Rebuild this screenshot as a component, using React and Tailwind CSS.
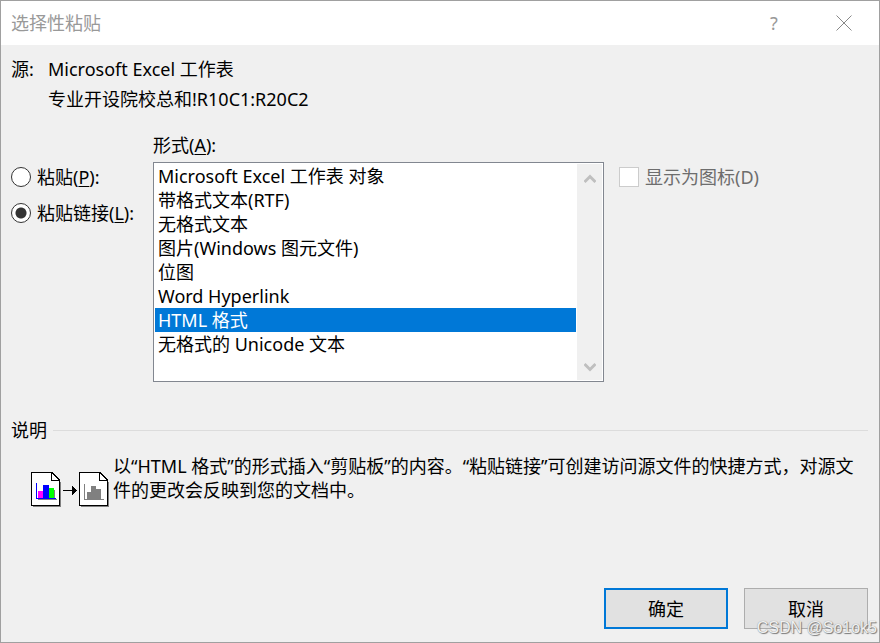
import { useState } from "react";

const formats = [
  "Microsoft Excel 工作表 对象",
  "带格式文本(RTF)",
  "无格式文本",
  "图片(Windows 图元文件)",
  "位图",
  "Word Hyperlink",
  "HTML 格式",
  "无格式的 Unicode 文本",
];

function PageIcon() {
  return (
    <>
      <path d="M2 34h28v1H2zM29 10h1v25h-1z" fill="#808080" />
      <path d="M0 0h21v1h-20v32h27v-24h1v25h-29z" fill="#000" />
      <path d="M1 1h19v8h8v24H1z" fill="#fff" />
      <path d="M20 0h1v8h8v1h-9z" fill="#000" />
      <path d="M21 1h1v1h1v1h1v1h1v1h1v1h1v1h1v1h-7z" fill="#fff" />
      <path d="M21 0h1v1h1v1h1v1h1v1h1v1h1v1h1v1h1v2h-1v-1h-1v-1h-1v-1h-1v-1h-1v-1h-1v-1h-1v-1h-1z" fill="#000" />
    </>
  );
}

function PasteLinkIcon() {
  return (
    <svg
      width="80"
      height="38"
      viewBox="0 0 80 38"
      shapeRendering="crispEdges"
      className="shrink-0"
      aria-hidden="true"
    >
      <PageIcon />
      <path d="M7 27h19v1H7zM23 18h1v9h-1z" fill="#808080" />
      <path d="M5 11h1v15h19v1H5z" fill="#00f" />
      <path d="M7 19h5v7H7z" fill="#f0f" />
      <path d="M12 13h6v13h-6z" fill="#00f" />
      <path d="M18 16h5v10h-5z" fill="#0f0" />
      <path d="M32 18h9v1h-9zM41 14h1v1h1v1h1v1h1v1h1v1h-1v1h-1v1h-1v1h-1v1h-1z" fill="#000" />
      <g transform="translate(48 0)">
        <PageIcon />
        <path d="M5 12h1v15h19v1H5z" fill="#808080" />
        <path d="M8 20h4v-6h5v3h5v10H8z" fill="#808080" />
      </g>
    </svg>
  );
}

function Radio({ checked, onChange, children }) {
  return (
    <label className="flex items-center gap-1.5 h-6 whitespace-nowrap">
      <input
        type="radio"
        name="mode"
        checked={checked}
        onChange={onChange}
        className="appearance-none size-5 shrink-0 rounded-full border border-[#333] bg-white checked:bg-[radial-gradient(circle,#333_5px,#fff_6px)]"
      />
      <span>{children}</span>
    </label>
  );
}

function App() {
  const [mode, setMode] = useState("link");
  const [selected, setSelected] = useState(6);

  return (
    <div className="relative min-h-screen flex flex-col bg-[#f0f0f0] border border-[#a0a0a0] text-black text-[18px] leading-6 font-['Noto_Sans','Noto_Sans_CJK_SC',sans-serif]">
      {/* Title bar */}
      <header className="h-11 flex items-center bg-white text-[#999] pl-2.5">
        <h1 className="flex-1">选择性粘贴</h1>
        <button className="w-[70px] h-full" aria-label="帮助">
          ?
        </button>
        <button className="w-[70px] h-full flex items-center justify-center" aria-label="关闭">
          <svg width="16" height="16" viewBox="0 0 16 16" stroke="#888" aria-hidden="true">
            <path d="M0.5 0.5l15 15M15.5 0.5l-15 15" />
          </svg>
        </button>
      </header>

      <main className="flex-1 flex flex-col pl-2.5 pr-[11px] pt-[9px] pb-[13px]">
        <div className="flex leading-[30px]">
          <span className="w-[37px]">源:</span>
          <div>
            <p>Microsoft Excel 工作表</p>
            <p>专业开设院校总和!R10C1:R20C2</p>
          </div>
        </div>

        <div className="flex mt-[19px]">
          <div className="w-[142px] shrink-0 flex flex-col gap-3 pt-8">
            <Radio checked={mode === "paste"} onChange={() => setMode("paste")}>
              粘贴(<u className="underline-offset-2">P</u>):
            </Radio>
            <Radio checked={mode === "link"} onChange={() => setMode("link")}>
              粘贴链接(<u className="underline-offset-2">L</u>):
            </Radio>
          </div>

          <div className="flex-1">
            <div id="format-label">
              形式(<u className="underline-offset-2">A</u>):
            </div>
            <div className="mt-[5px] h-[220px] flex gap-px p-px bg-white border border-[#828790]">
              <ul role="listbox" aria-labelledby="format-label" className="flex-1">
                {formats.map((format, idx) => (
                  <li
                    key={format}
                    role="option"
                    aria-selected={idx === selected}
                    onClick={() => setSelected(idx)}
                    className={`h-6 px-[3px] cursor-default whitespace-nowrap ${
                      idx === selected ? "bg-[#0078d7] text-white" : ""
                    }`}
                  >
                    {format}
                  </li>
                ))}
              </ul>
              <div className="w-[25px] flex flex-col justify-between items-center pt-2.5 pb-2 bg-[#f0f0f0]">
                <svg width="12" height="10" viewBox="0 0 12 10" fill="none" stroke="#bfbfbf" strokeWidth="3" aria-hidden="true">
                  <path d="M0.5 8L6 2.5L11.5 8" />
                </svg>
                <svg width="12" height="10" viewBox="0 0 12 10" fill="none" stroke="#bfbfbf" strokeWidth="3" aria-hidden="true">
                  <path d="M0.5 2L6 7.5L11.5 2" />
                </svg>
              </div>
            </div>
          </div>

          <div className="w-[264px] shrink-0 pl-[15px] pt-8">
            <label className="flex items-center gap-1.5 h-6 text-[#6d6d6d]">
              <input
                type="checkbox"
                disabled
                className="appearance-none size-5 border border-[#ccc] bg-white"
              />
              <span>显示为图标(D)</span>
            </label>
          </div>
        </div>

        {/* Description */}
        <section className="mt-9">
          <div className="flex items-center gap-1.5">
            <h2>说明</h2>
            <div className="flex-1 h-px bg-[#dcdcdc]" />
          </div>
          <div className="flex gap-0.5 mt-3 pl-5">
            <div className="pt-[18px]">
              <PasteLinkIcon />
            </div>
            <p className="flex-1">
              以“HTML 格式”的形式插入“剪贴板”的内容。“粘贴链接”可创建访问源文件的快捷方式，对源文件的更改会反映到您的文档中。
            </p>
          </div>
        </section>

        <footer className="mt-auto flex justify-end gap-4 leading-5">
          <button className="w-[124px] h-[41px] bg-[#e1e1e1] border-2 border-[#0078d7]">
            确定
          </button>
          <button className="w-[124px] h-[41px] bg-[#e1e1e1] border border-[#adadad]">
            取消
          </button>
        </footer>
      </main>

      <div className="absolute right-0.5 bottom-1.5 text-base leading-4 text-[#f0f0f0] font-['Liberation_Sans',sans-serif] [text-shadow:1px_1px_1px_#777,0_0_1px_#888] pointer-events-none">
        CSDN @So1ok5
      </div>
    </div>
  );
}

export default App;
